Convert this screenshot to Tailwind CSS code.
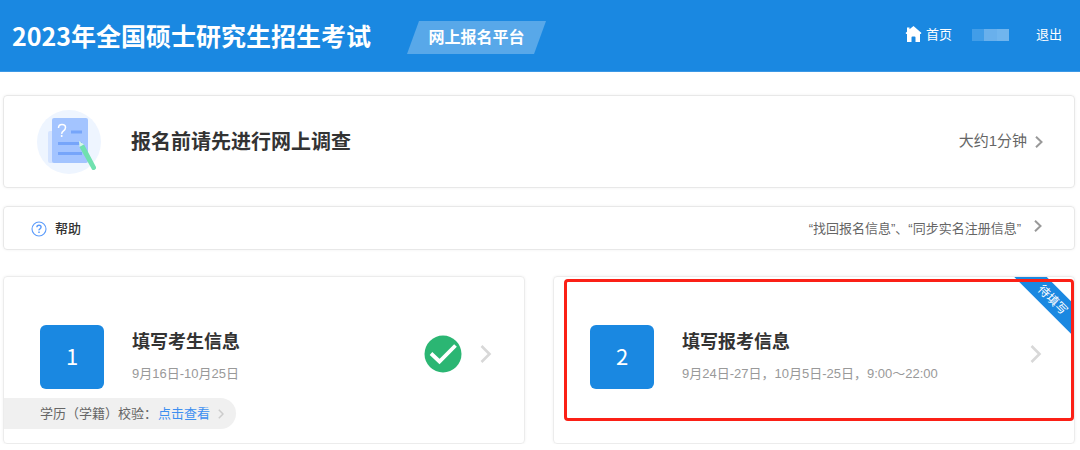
<!DOCTYPE html>
<html lang="zh-CN">
<head>
<meta charset="utf-8">
<meta name="viewport" content="width=device-width, initial-scale=1">
<title>2023年全国硕士研究生招生考试</title>
<script src="https://cdn.jsdelivr.net/npm/@tailwindcss/browser@4"></script>
</head>
<body class="bg-white font-['Liberation_Sans','Noto_Sans_CJK_SC',sans-serif] text-[13px] text-[#333]">
<header class="flex h-[72px] items-center justify-between border-b border-[#3b98e6] bg-[#1a88e1] pl-3 pr-[18px] pb-[2px] text-white">
  <div class="flex items-center gap-9">
    <h1 class="whitespace-nowrap font-['Noto_Sans_CJK_SC',sans-serif] text-[25px] font-bold leading-8">2023年全国硕士研究生招生考试</h1>
    <span class="mt-[6px] flex h-[33px] w-[139px] items-center justify-center bg-white/27 text-base font-bold [clip-path:polygon(12px_0,100%_0,calc(100%-12px)_100%,0_100%)]">网上报名平台</span>
  </div>
  <nav class="flex items-center leading-5">
    <a href="#" class="flex items-center gap-1">
      <svg class="size-[17px]" viewBox="0 0 17 17" fill="#fff" aria-hidden="true"><path d="M2 1.500h2.500v1.700L8.500 0 16.500 7 15.600 8H15v8h-4.500v-4.500q0-1-1-1H7.500q-1 0-1 1V16H2V8h-.6L.5 7 2 5.700z"/></svg>
      首页
    </a>
    <span class="ml-5 flex h-3 w-[37px]"><i class="flex-1 bg-[#419de8]"></i><i class="flex-1 bg-[#69b0ec]"></i><i class="flex-1 bg-[#70b5ee]"></i></span>
    <a href="#" class="ml-[27px]">退出</a>
  </nav>
</header>

<main class="pl-[3px] pr-[5px] pt-[23px]">
  <a href="#" class="flex h-[93px] items-center rounded border border-[#e8e8e8] pl-[33px] pr-[31px] shadow-[0_0_3px_rgba(0,0,0,0.06)]">
    <svg class="size-16 shrink-0" viewBox="0 0 64 64" aria-hidden="true">
      <circle cx="32" cy="32" r="32" fill="#eef5ff"/>
      <rect x="11" y="21" width="12" height="32" rx="2" fill="#d5e4ff"/>
      <rect x="15" y="8" width="36" height="45" rx="2" fill="#a3c4ff"/>
      <path d="M34 22h11M21 33.500h24M21 43.500h24" stroke="#76a5fa" stroke-width="3"/>
      <path d="M21.500 18q0-3.500 3.500-3.500t3.500 3q0 1.800-2 3.300t-1.700 3.200" fill="none" stroke="#fff" stroke-width="1.500"/>
      <circle cx="24.700" cy="26" r="1" fill="#fff"/>
      <path d="M42 31l5 3.500-4.500 2.500z" fill="#d5f8e8"/>
      <path d="M42.500 37l4.500-2.500L59 57q.5 1.500-1 2.500t-3 0z" fill="#70e1af"/>
    </svg>
    <h2 class="ml-[30px] text-xl font-bold">报名前请先进行网上调查</h2>
    <span class="ml-auto text-[15px] text-[#666]">大约1分钟</span>
    <svg class="ml-2 h-3 w-2" viewBox="0 0 8 12" fill="none" stroke="#999" stroke-width="2" aria-hidden="true"><path d="M1 .8L6.500 6 1 11.200"/></svg>
  </a>

  <a href="#" class="mt-[18px] flex h-11 items-center rounded border border-[#e8e8e8] pl-[27px] pr-8 shadow-[0_0_3px_rgba(0,0,0,0.06)]">
    <svg class="mt-[2px] size-4" viewBox="0 0 16 16" fill="none" stroke="#5b9bfb" aria-hidden="true"><circle cx="8" cy="8" r="7" stroke-width="1.100"/><path d="M5.900 6.300Q5.900 4.300 8 4.300t2.100 1.800q0 1.100-1.100 1.700T8 9.400" stroke-width="1.400"/><path d="M8 10.500v1.400" stroke-width="1.500"/></svg>
    <span class="ml-2 pt-[2px] font-medium">帮助</span>
    <span class="ml-auto pt-[2px] text-[#666]">“找回报名信息”、“同步实名注册信息”</span>
    <svg class="ml-[13px] -mt-1 h-3 w-2" viewBox="0 0 8 12" fill="none" stroke="#999" stroke-width="2" aria-hidden="true"><path d="M1 .8L6.500 6 1 11.200"/></svg>
  </a>

  <div class="mt-[26px] grid grid-cols-2 gap-7">
    <section class="h-[168px] rounded-sm border border-[#ececec] shadow-[0_0_3px_rgba(0,0,0,0.06)]">
      <a href="#" class="flex items-center pl-9 pr-8 pt-12">
        <span class="flex size-16 shrink-0 items-center justify-center rounded-md bg-[#1a88e1] pb-1 font-['Noto_Sans_CJK_SC',sans-serif] text-[22px] text-white">1</span>
        <span class="ml-7 pb-[2px]">
          <strong class="block text-lg font-bold leading-8">填写考生信息</strong>
          <span class="block pt-1 leading-6 text-[#999]">9月16日-10月25日</span>
        </span>
        <svg class="ml-auto mt-[-6px] size-[38px]" viewBox="0 0 38 38" aria-hidden="true"><circle cx="19" cy="19" r="18.500" fill="#2bb673"/><path d="M7 18.500L15.500 26.500 31.500 10.500" fill="none" stroke="#fff" stroke-width="3.800"/></svg>
        <svg class="ml-[18px] mt-[-6px] h-[18px] w-3" viewBox="0 0 12 18" fill="none" stroke="#d8d8d8" stroke-width="2.600" aria-hidden="true"><path d="M1.500 1L9.500 9 1.500 17"/></svg>
      </a>
      <p class="mt-[9px] flex h-[31px] w-max items-center rounded-r-full bg-[#f0f0f0] pl-9 pr-3 text-[#666]">学历（学籍）校验：
        <a href="#" class="ml-[1px] flex items-center gap-2 text-[#3d8ff0]">点击查看
          <svg class="h-[10px] w-[6px]" viewBox="0 0 6 10" fill="none" stroke="#ccc" stroke-width="1.500" aria-hidden="true"><path d="M.8.8L5 5 .8 9.200"/></svg>
        </a>
      </p>
    </section>

    <section class="relative h-[168px] rounded-sm border border-[#ececec] shadow-[0_0_3px_rgba(0,0,0,0.06)]">
      <a href="#" class="flex items-center pl-9 pr-8 pt-12">
        <span class="flex size-16 shrink-0 items-center justify-center rounded-md bg-[#1a88e1] pb-1 font-['Noto_Sans_CJK_SC',sans-serif] text-[22px] text-white">2</span>
        <span class="ml-7 pb-[2px]">
          <strong class="block text-lg font-bold leading-8">填写报考信息</strong>
          <span class="block pt-1 leading-6 text-[#999]">9月24日-27日，10月5日-25日，9:00～22:00</span>
        </span>
        <svg class="ml-auto mt-[-6px] h-[18px] w-3" viewBox="0 0 12 18" fill="none" stroke="#d8d8d8" stroke-width="2.600" aria-hidden="true"><path d="M1.500 1L9.500 9 1.500 17"/></svg>
      </a>
      <div class="absolute right-0 top-0 size-[60px] overflow-hidden">
        <span class="absolute left-[-11px] top-[11px] flex h-[23px] w-[100px] rotate-45 items-center justify-center bg-[#1a88e1] text-xs text-white">待填写</span>
      </div>
      <div class="absolute bottom-[22px] left-[10px] right-0 top-[2px] rounded-[4px] border-3 border-[#fb2016]"></div>
    </section>
  </div>
</main>
</body>
</html>
